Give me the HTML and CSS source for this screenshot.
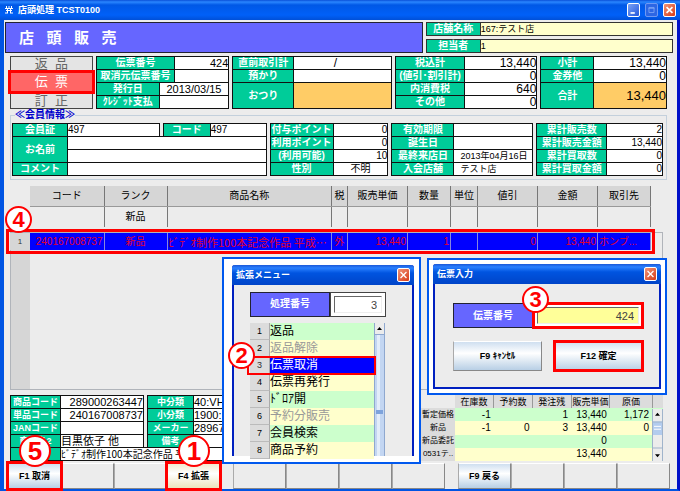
FILE: index.html
```html
<!DOCTYPE html>
<html lang="ja">
<head>
<meta charset="utf-8">
<title>店頭処理 TCST0100</title>
<link rel="stylesheet" href="styles.css">
</head>
<body>
<div class="app">
  <header class="titlebar">
    <svg class="app-icon" viewBox="0 0 8 8" aria-hidden="true"><path d="M1.500 0v2M4 0v2M6.500 0v2M0 2.500h8M1 4.500h6M2.500 3v4M5.500 3v4M0 7h3M5 7h3" fill="none" stroke="#fff" stroke-width="1"/></svg>
    <span class="titlebar-text">店頭処理 TCST0100</span>
    <button class="win-btn" aria-label="最小化"><svg viewBox="0 0 13 13"><path d="M3 9h5v2H3z" fill="#fff"/></svg></button>
    <button class="win-btn win-off" aria-label="最大化"><svg viewBox="0 0 13 13"><path d="M3.500 3.500h6v6h-6zM3 4.500h7" fill="none" stroke="#7fa6f5"/></svg></button>
    <button class="win-btn win-close" aria-label="閉じる"><svg viewBox="0 0 13 13"><path d="M3 3l7 7M10 3l-7 7" stroke="#fff" stroke-width="2"/></svg></button>
  </header>

  <div class="heading">
    <h1>店&nbsp;&nbsp;&nbsp;頭&nbsp;&nbsp;&nbsp;販&nbsp;&nbsp;&nbsp;売</h1>
    <div class="shop">
      <dl><dt>店舗名称</dt><dd>167:テスト店</dd></dl>
      <dl><dt>担当者</dt><dd>1</dd></dl>
    </div>
  </div>

  <main class="content">
    <div class="summary">
      <div class="modes">
        <button>返&nbsp;&nbsp;品</button>
        <button class="active marked">伝&nbsp;&nbsp;票</button>
        <button>訂&nbsp;&nbsp;正</button>
      </div>
      <div class="slip">
        <dl class="cells slip-a"><dt>伝票番号</dt><dd class="date end">424</dd><dt>取消元伝票番号</dt><dd></dd></dl>
        <dl class="cells slip-b"><dt>発行日</dt><dd class="date">2013/03/15</dd><dt>ｸﾚｼﾞｯﾄ支払</dt><dd></dd></dl>
      </div>
      <dl class="cells change"><dt>直前取引計</dt><dd class="slash">/</dd><dt>預かり</dt><dd></dd><dt class="tall">おつり</dt><dd class="tall gold"></dd></dl>
      <dl class="cells tax"><dt>税込計</dt><dd class="num">13,440</dd><dt>(値引･割引計)</dt><dd class="num">0</dd><dt>内消費税</dt><dd class="num">640</dd><dt>その他</dt><dd class="num">0</dd></dl>
      <dl class="cells total"><dt>小計</dt><dd class="num">13,440</dd><dt>金券他</dt><dd class="num">0</dd><dt class="tall">合計</dt><dd class="tall gold num">13,440</dd></dl>
    </div>

    <fieldset class="member">
      <legend>≪会員情報≫</legend>
      <div class="member-row">
        <div class="person">
          <div class="person-ids">
            <dl class="cells id-card"><dt>会員証</dt><dd>497</dd></dl>
            <dl class="cells id-code"><dt>コード</dt><dd>497</dd></dl>
          </div>
          <dl class="cells person-name"><dt class="tall">お名前</dt><dd></dd><dd></dd><dt>コメント</dt><dd></dd></dl>
        </div>
        <dl class="cells points"><dt>付与ポイント</dt><dd class="right">0</dd><dt>利用ポイント</dt><dd class="right">0</dd><dt>(利用可能)</dt><dd class="right">10</dd><dt>性別</dt><dd class="mid">不明</dd></dl>
        <dl class="cells visits"><dt>有効期限</dt><dd></dd><dt>誕生日</dt><dd></dd><dt>最終来店日</dt><dd class="inset">2013年04月16日</dd><dt>入会店舗</dt><dd class="inset">テスト店</dd></dl>
        <dl class="cells sums"><dt>累計販売数</dt><dd class="right">2</dd><dt>累計販売金額</dt><dd class="right">13,440</dd><dt>累計買取数</dt><dd class="right">0</dd><dt>累計買取金額</dt><dd class="right">0</dd></dl>
      </div>
    </fieldset>

    <section class="goods">
      <table class="goods-table">
        <colgroup><col class="g-no"><col class="g-code"><col class="g-rank"><col class="g-name"><col class="g-tax"><col class="g-price"><col class="g-qty"><col class="g-unit"><col class="g-price"><col class="g-price"><col class="g-maker"></colgroup>
        <thead>
          <tr class="head"><td></td><th>コード</th><th>ランク</th><th>商品名称</th><th>税</th><th>販売単価</th><th>数量</th><th>単位</th><th>値引</th><th>金額</th><th>取引先</th></tr>
          <tr class="entry"><td></td><td></td><td>新品</td><td></td><td></td><td></td><td></td><td></td><td></td><td></td><td></td></tr>
        </thead>
        <tbody>
          <tr class="space"><td colspan="11"></td></tr>
          <tr class="picked marked"><th>1</th><td class="right">240167008737</td><td>新品</td><td class="left long">ﾋﾞﾃﾞｵ制作100本記念作品 平成…</td><td>外</td><td class="right">13,440</td><td class="right">1</td><td></td><td class="right">0</td><td class="right">13,440</td><td class="left">ホンブ...</td></tr>
        </tbody>
      </table>
      <div class="goods-rest"></div>
      <span class="badge badge-4">4</span>
    </section>

    <div class="details">
      <div class="item">
        <div class="item-pair">
          <dl class="cells codes"><dt>商品コード</dt><dd class="right">289000263447</dd><dt>単品コード</dt><dd class="right">240167008737</dd><dt>JANコード</dt><dd></dd><dt>商品名2</dt><dd>目黒依子 他</dd></dl>
          <dl class="cells classes"><dt>中分類</dt><dd>40:VHS</dd><dt>小分類</dt><dd>1900:</dd><dt>メーカー</dt><dd>28967</dd><dt>備考</dt><dd></dd></dl>
        </div>
        <dl class="cells item-name"><dt>商品名</dt><dd>ﾋﾞﾃﾞｵ制作100本記念作品 平成…</dd></dl>
      </div>
      <table class="stock">
        <colgroup><col class="s-kind"><col class="s-n"><col class="s-n"><col class="s-n"><col class="s-n"><col class="s-cost"><col class="s-bar"></colgroup>
        <thead><tr><td></td><th>在庫数</th><th>予約数</th><th>発注残</th><th>販売単価</th><th>原価</th><td class="grey"></td></tr></thead>
        <tbody>
          <tr><th>暫定価格</th><td>-1</td><td></td><td>1</td><td>13,440</td><td>1,172</td>
            <td class="bar" rowspan="4"><svg viewBox="0 0 11 54" preserveAspectRatio="none" aria-hidden="true"><path d="M0 0h11v54H0z" fill="#ececec"/><path d="M0 13h11v14H0z" fill="#b3ccee"/><path d="M2 18h7M2 21h7" stroke="#fff"/><path d="M3 7h5L5.500 4zM3 47h5l-2.500 3z" fill="#000"/><path d="M.5 0v54M10.500 0v54M0 13.500h11M0 40.500h11" stroke="#9eb2ca" fill="none"/></svg></td></tr>
          <tr><th>新品</th><td>-1</td><td>0</td><td>3</td><td>13,440</td><td>0</td></tr>
          <tr><th>新品委託</th><td></td><td></td><td></td><td>0</td><td></td></tr>
          <tr><th>0531テ..</th><td></td><td></td><td></td><td>13,440</td><td></td></tr>
        </tbody>
      </table>
    </div>
  </main>

  <footer class="keys">
    <div class="key-group"><button class="key set marked">F1 取消<span class="badge big badge-5">5</span></button><button class="key" aria-label="F2"></button><button class="key" aria-label="F3"></button><button class="key warm marked">F4 拡張<span class="badge big badge-1">1</span></button></div>
    <div class="key-group"><button class="key" aria-label="F5"></button><button class="key" aria-label="F6"></button><button class="key" aria-label="F7"></button><button class="key" aria-label="F8"></button></div>
    <div class="key-group"><button class="key set">F9 戻る</button><button class="key" aria-label="F10"></button><button class="key" aria-label="F11"></button><button class="key" aria-label="F12"></button></div>
  </footer>

  <section class="popup popup-menu" aria-labelledby="menu-title">
    <div class="dialog">
      <div class="dialog-title"><h2 id="menu-title">拡張メニュー</h2><button class="win-btn win-close" aria-label="閉じる"><svg viewBox="0 0 13 13"><path d="M3 3l7 7M10 3l-7 7" stroke="#fff" stroke-width="1.500"/></svg></button></div>
      <div class="menu-body">
        <div class="field"><label for="proc">処理番号</label><span class="box"><input id="proc" value="3"></span></div>
        <div class="list">
          <ol>
            <li><b>1</b><span>返品</span></li>
            <li class="off"><b>2</b><span>返品解除</span></li>
            <li class="chosen"><b>3</b><span>伝票取消</span><i class="badge badge-2">2</i></li>
            <li><b>4</b><span>伝票再発行</span></li>
            <li><b>5</b><span>ﾄﾞﾛｱ開</span></li>
            <li class="off"><b>6</b><span>予約分販売</span></li>
            <li><b>7</b><span>会員検索</span></li>
            <li><b>8</b><span>商品予約</span></li>
          </ol>
          <svg class="list-bar" viewBox="0 0 11 133" preserveAspectRatio="none" aria-hidden="true"><path d="M0 0h11v133H0z" fill="#ececec"/><path d="M1 12h9v121H1z" fill="#c3d6f2"/><path d="M3 12h3v121H3z" fill="#e3edfa"/><path d="M3 7h5L5.500 4z" fill="#000"/><path d="M.5 0v133M10.500 0v133M0 11.500h11" stroke="#8fa8cf" fill="none"/><path d="M2 87h7v4H2z" fill="#7ea3dc"/></svg>
        </div>
      </div>
    </div>
  </section>

  <section class="popup popup-entry" aria-labelledby="entry-title">
    <div class="dialog">
      <div class="dialog-title"><h2 id="entry-title">伝票入力</h2><button class="win-btn win-close" aria-label="閉じる"><svg viewBox="0 0 13 13"><path d="M3 3l7 7M10 3l-7 7" stroke="#fff" stroke-width="1.500"/></svg></button></div>
      <div class="entry-body">
        <div class="field"><label for="slip">伝票番号</label><span class="box marked"><input id="slip" class="focus" value="424"><i class="badge badge-3">3</i></span></div>
        <div class="actions"><button class="key set">F9 ｷｬﾝｾﾙ</button><button class="key set marked">F12 確定</button></div>
      </div>
    </div>
  </section>
</div>
</body>
</html>
```
FILE: styles.css
```css
* { box-sizing: border-box; }

body {
  margin: 0;
  background: #ececec;
  color: #000;
  font: 10px/12px "Liberation Sans", "Noto Sans CJK JP", sans-serif;
}

h1, h2, dl, dd, dt, ol { margin: 0; padding: 0; }

button, input { font: inherit; color: inherit; padding: 0; margin: 0; }

.app {
  position: relative;
  display: flex;
  flex-direction: column;
  min-height: 100vh;
  border: solid #0054e3;
  border-width: 0 3px 2px 4px;
  border-right-color: #0010c8;
}

/* title bar */
.titlebar {
  display: flex;
  align-items: center;
  gap: 5px;
  height: 20px;
  margin: 0 -3px 0 -4px;
  padding: 0 4px 0 5px;
  background: linear-gradient(#0a50d8, #2a86ff 2px, #0058e6 5px, #0060f8 15px, #0050d8);
  color: #fff;
}
.app-icon { width: 8px; height: 8px; }
.titlebar-text { flex: 1; font-size: 9px; font-weight: bold; }

.win-btn {
  width: 13px;
  height: 14px;
  border: 1px solid #fff;
  border-radius: 2px;
  background: linear-gradient(135deg, #7ba2f5, #2458dc);
}
.win-btn svg { display: block; width: 100%; height: 100%; }
.win-off { border-color: #6f99f3; background: #2c66e4; }
.win-close { background: linear-gradient(135deg, #f09478, #d83c18); }

/* screen heading */
.heading {
  display: flex;
  gap: 3px;
  height: 31px;
  margin: 2px 4px 3px 1px;
}
.heading h1 {
  flex: 1;
  padding-left: 13px;
  border: 1px solid #223;
  background: #6666ff;
  color: #fff;
  font-size: 15px;
  font-weight: bold;
  line-height: 29px;
}
.shop {
  display: flex;
  flex-direction: column;
  justify-content: space-between;
  width: 37%;
}
.shop dl { display: flex; border: 1px solid #333; background: #ffffcc; line-height: 12px; }
.shop dt { width: 54px; border-right: 1px solid #333; background: #00cc99; color: #fff; font-weight: bold; text-align: center; }
.shop dd { font-size: 9px; }

/* label and value cells */
.cells {
  display: grid;
  grid-auto-rows: 12px;
  gap: 1px;
  padding: 1px;
  background: #111;
}
.cells dt {
  background: #00cc99;
  color: #fff;
  font-weight: bold;
  text-align: center;
  white-space: nowrap;
  overflow: hidden;
}
.cells dd { background: #fff; white-space: nowrap; overflow: hidden; }
.cells .tall { grid-row: span 2; line-height: 25px; }
.cells .gold { background: #ffcc66; }
.cells .num { font-size: 12px; text-align: right; }
.cells .mid { text-align: center; }
.cells .right { text-align: right; }
.cells .slash { padding-right: 14px; font-size: 12px; text-align: center; }
.cells .inset { padding-left: 6px; font-size: 9px; }
.cells .date { font-size: 11px; text-align: center; }
.cells .end { text-align: right; }

.content {
  display: flex;
  flex: 1;
  flex-direction: column;
  padding: 0 10px 0 6px;
}

.summary {
  display: grid;
  grid-template-columns: 83fr 134fr 160fr 143fr 127fr;
  gap: 3px;
}
.modes { display: grid; grid-template-rows: 16px 20px 17px; }
.modes button {
  border: 1px solid #444;
  background: #e4e4e4;
  color: #666;
  font-size: 13px;
  line-height: 14px;
  overflow: hidden;
}
.modes .active { background: #ff6666; color: #fff; }
.slip-a { grid-template-columns: 79fr 54fr; }
.slip-b { grid-template-columns: 63fr 70fr; margin-top: -1px; }
.change { grid-template-columns: 61fr 99fr; }
.tax { grid-template-columns: 70fr 73fr; }
.total { grid-template-columns: 53fr 73fr; }
.total .gold { font-size: 13px; }

.marked { position: relative; outline: 3px solid #f00; outline-offset: -1px; z-index: 1; }

/* member information */
.member {
  min-width: 0;
  margin: 0;
  padding: 2px 3px 3px 1px;
  border: 1px solid #c3d0dc;
}
.member legend { margin-left: 3px; padding: 0; color: #0000cc; font-weight: bold; }
.member-row {
  display: grid;
  grid-template-columns: 255fr 119fr 142fr 127fr;
  gap: 3px;
}
.person-ids { display: grid; grid-template-columns: 148fr 104fr; gap: 3px; }
.person-name { grid-template-columns: 54px 1fr; margin-top: -1px; }
.id-card { grid-template-columns: 54px 1fr; }
.id-code { grid-template-columns: 46px 1fr; }
.points { grid-template-columns: 62px 1fr; }
.visits { grid-template-columns: 61px 1fr; }
.sums { grid-template-columns: 69px 1fr; }

/* goods list */
.goods {
  position: relative;
  display: flex;
  flex: 1;
  flex-direction: column;
  margin-top: 6px;
}
.goods-table {
  position: relative;
  z-index: 1;
  width: calc(100% - 16px);
  table-layout: fixed;
  border-collapse: collapse;
}
.goods-table th, .goods-table td { padding: 0 1px; text-align: center; font-weight: normal; white-space: nowrap; overflow: hidden; }
.g-no { width: 20px; }
.g-code { width: 74px; }
.g-rank { width: 63px; }
.g-tax { width: 16px; }
.g-price { width: 60px; }
.g-qty { width: 43px; }
.g-unit { width: 27px; }
.g-maker { width: 53px; }
.head { height: 20px; }
.head th { border-right: 1px solid #777; border-bottom: 1px solid #999; background: #d6d6d6; }
.entry { height: 21px; }
.entry td + td { border-right: 1px solid #777; }
.space { height: 6px; line-height: 0; }
.picked { height: 17px; background: #0000ff; color: #e00030; }
.goods-table .picked { outline-offset: 1px; }
.picked td { border-right: 1px solid #8888dd; }
.picked th { background: #d6d6d6; color: #333; font-size: 8px; }
.goods-table .right { text-align: right; }
.goods-table .left { text-align: left; }
.goods-table .long { font-family: "Noto Sans CJK JP", sans-serif; font-size: 11px; }
.goods-rest {
  flex: 1;
  min-height: 60px;
  margin: -18px 4px 0 0;
  border: 1px solid #b0b4ba;
  background: linear-gradient(90deg, #d6d6d6 19px, #ececec 19px);
}

/* numbered marks */
.badge {
  position: absolute;
  z-index: 3;
  width: 27px;
  height: 27px;
  border: 2px solid #f00;
  border-radius: 50%;
  background: #fff;
  color: #f00;
  font: bold 22px/23px "Liberation Sans", sans-serif;
  text-align: center;
}
.big { width: 32px; height: 32px; font-size: 26px; line-height: 28px; }
.badge-4 { left: -5px; top: 20px; }
.badge-2 { left: -22px; top: -15px; }
.badge-3 { left: -12px; top: -18px; }
.badge-5 { left: 10px; top: -29px; }
.badge-1 { left: 10px; top: -29px; }

/* item details and stock */
.details {
  display: grid;
  grid-template-columns: 408fr 242fr;
  gap: 3px;
  margin: 5px 4px 0 0;
}
.item-pair { display: grid; grid-template-columns: 134fr 271fr; gap: 3px; }
.item .cells dt { font-size: 9px; }
.item .cells dd { font-size: 11px; }
.codes { grid-template-columns: 49px 1fr; }
.classes { grid-template-columns: 45px 1fr; }
.item-name { grid-template-columns: 49px 1fr; margin-top: -1px; }
.item .item-name dd { font-family: "Noto Sans CJK JP", sans-serif; font-size: 10px; }

.stock { width: 100%; table-layout: fixed; border-collapse: collapse; }
.s-kind { width: 34px; }
.s-n { width: 16%; }
.s-bar { width: 11px; }
.stock tr { height: 13px; }
.stock th, .stock td { padding: 0; white-space: nowrap; overflow: hidden; }
.stock th { background: #dcdcdc; font-size: 9px; font-weight: normal; text-align: center; }
.stock tbody th { font-size: 8px; }
.stock thead th { border-right: 1px solid #999; }
.stock .grey { background: #dcdcdc; }
.stock tbody td { padding-right: 3px; font-size: 10px; text-align: right; }
.stock tbody tr:nth-child(odd) { background: #ccffcc; }
.stock tbody tr:nth-child(even) { background: #ffffcc; }
.stock tbody td.bar { height: 52px; padding: 0; }
.bar svg { display: block; width: 100%; height: 100%; }

/* function keys */
.keys {
  display: grid;
  grid-template-columns: repeat(3, 1fr);
  gap: 13px;
  margin: 2px 7px 0 4px;
}
.key-group { display: grid; grid-template-columns: repeat(4, 1fr); }
.key {
  height: 26px;
  border: 1px solid;
  border-color: #fff #888 #888 #aaa;
  background: #ececec;
  font-size: 9px;
  font-weight: bold;
}
.set { background: linear-gradient(#cfdff0, #fff 40%, #b8cfe5); }
.warm { background: linear-gradient(#f2ecd0, #fff 40%, #ece4bc); }

/* dialogs floating over the screen */
.popup {
  position: absolute;
  z-index: 2;
  border: 2px solid #0058ee;
  background: #fff;
}
.popup-menu { left: 218px; top: 257px; width: 199px; padding: 6px 5px 6px 8px; }
.popup-entry { left: 423px; top: 258px; width: 240px; padding: 4px; }
.dialog {
  border: 2px solid #0020c0;
  border-top: 0;
  border-radius: 3px 3px 0 0;
  background: #ececec;
}
.popup-menu .dialog { border-bottom: 0; }
.dialog-title {
  display: flex;
  align-items: center;
  justify-content: space-between;
  height: 20px;
  margin: 0 -2px;
  padding: 0 4px;
  border-radius: 3px 3px 0 0;
  background: linear-gradient(#1a58d8, #2a80ff 3px, #0054e0 8px, #0044c8);
  color: #fff;
}
.dialog-title h2 { font-size: 9px; font-weight: bold; }

.field { display: flex; }
.field label {
  flex: 0 0 80px;
  border: 1px solid #223;
  background: #6666ff;
  color: #fff;
  font-weight: bold;
  line-height: 22px;
  text-align: center;
}
.box { flex: 1; display: flex; border: 1px solid #444; background: #fff; padding: 3px; }
.box input {
  width: 100%;
  min-width: 0;
  height: 17px;
  padding-right: 4px;
  border: 1px solid;
  border-color: #666 #eee #eee #666;
  border-radius: 0;
  background: #fff;
  font-size: 11px;
  text-align: right;
  color: #444;
}
.box .focus { background: #ffff99; }

.menu-body { padding: 7px 24px 0 16px; }
.menu-body .box { margin-right: 2px; }
.list { display: flex; height: 133px; margin-top: 6px; margin-right: 3px; }
.list ol { flex: 1; display: grid; grid-template-rows: repeat(8, 1fr); list-style: none; }
.list li { position: relative; display: flex; background: #ccffcc; font-size: 12px; line-height: 16px; }
.list li:nth-child(even) { background: #ffffcc; }
.list b {
  flex: 0 0 20px;
  border-right: 1px solid #aaa;
  border-bottom: 1px solid #bbb;
  background: #dcdcdc;
  font-size: 9px;
  font-weight: normal;
  text-align: center;
}
.list .off span { color: #999; }
.list .chosen { z-index: 1; background: #0000ff; color: #fff; }
.chosen::after {
  content: "";
  position: absolute;
  inset: -1px -2px -1px -3px;
  border: 2px solid #f00;
}
.chosen b { color: #333; }
.list-bar { width: 11px; height: 133px; }

.entry-body { padding: 19px 16px 16px 18px; }
.entry-body .field label { line-height: 23px; }
.entry-body .marked { outline-width: 3px; outline-offset: -2px; }
.entry-body .actions { display: grid; grid-template-columns: 1fr 1fr; gap: 12px; margin-top: 13px; }
.entry-body .key { height: 30px; }
```
